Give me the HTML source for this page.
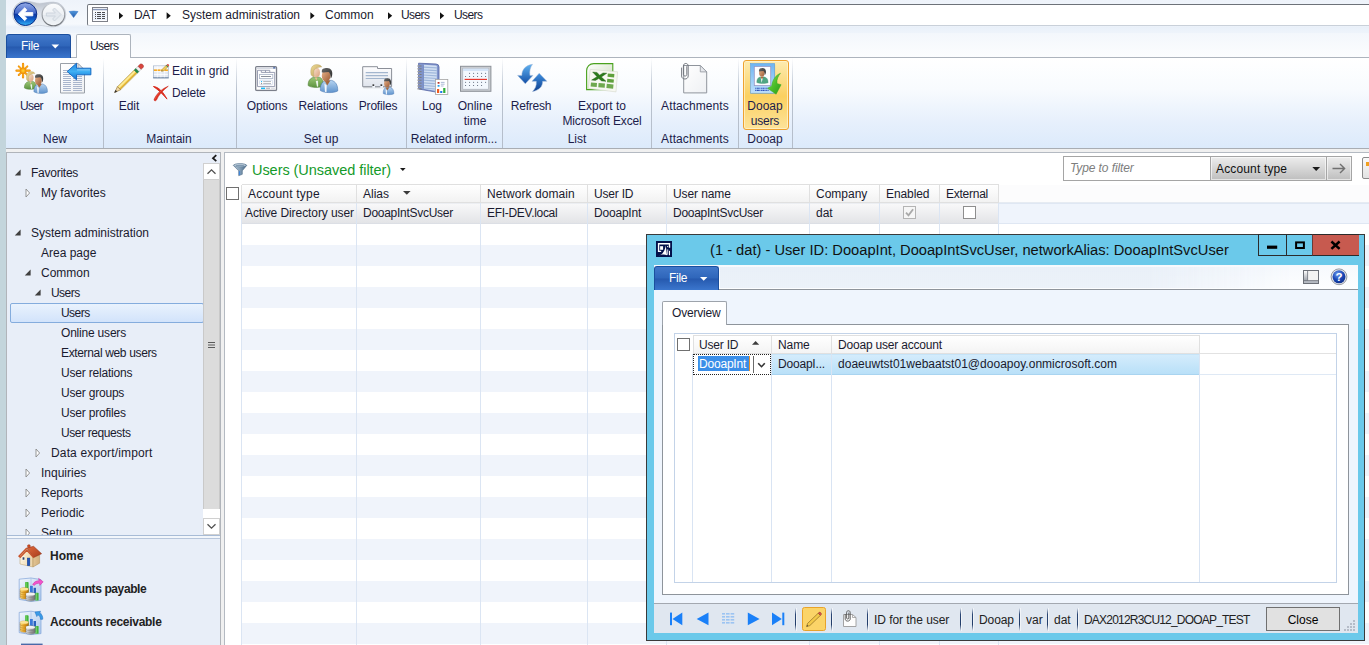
<!DOCTYPE html>
<html lang="en">
<head>
<meta charset="utf-8">
<title>Users - Microsoft Dynamics AX</title>
<style>
*{box-sizing:border-box;margin:0;padding:0}
html,body{width:1369px;height:645px;overflow:hidden}
body{position:relative;background:#f0f0f0;font-family:"Liberation Sans",Arial,sans-serif;font-size:12px;color:#1a1a2e;line-height:14px}
.abs{position:absolute}
.t{position:absolute;white-space:nowrap;line-height:14px;height:14px}
.c{text-align:center}
svg{position:absolute;overflow:visible}
/* left strip */
#strip{left:0;top:0;width:6px;height:645px;background:#c3d5dc}
/* top address bar */
#top{left:6px;top:0;width:1363px;height:33px;background:linear-gradient(#eef3fa 0,#f6f9fd 24px,#e9f0f9 27px,#eef4fb 33px)}
#addr{left:87px;top:4px;width:1290px;height:22px;background:#fff;border:1px solid #9aa1aa;border-top-color:#6d7279;border-left-color:#767b83;border-bottom-color:#c9d0d9;border-radius:2px}
#tabrow{left:6px;top:33px;width:1363px;height:25px;background:linear-gradient(#f3f7fc,#fcfdfe)}
#filebtn{left:6px;top:34px;width:65px;height:24px;border-radius:3px 3px 0 0;background:linear-gradient(#4178ca 0%,#2f66ba 48%,#2659ae 52%,#3b76cd 100%);border:1px solid #1b4f9e;border-bottom:none}
#userstab{left:76px;top:34px;width:55px;height:24px;background:#fff;border:1px solid #adb4bd;border-bottom:none;border-radius:2px 2px 0 0}
/* ribbon */
#ribbon{left:6px;top:57px;width:1363px;height:92px;background:linear-gradient(#ffffff 0%,#f8fbfe 35%,#e7f0fc 70%,#dceafb 100%);border-top:1px solid #adb4bd;border-bottom:1px solid #a9adb3}
.rsep{position:absolute;top:58px;width:1px;height:90px;background:linear-gradient(rgba(185,194,207,0),#b9c2cf 35%,#b4bdca)}
.rl{color:#1c1c4a}
/* nav */
#nav{left:6px;top:152px;width:215px;height:493px;background:#e8eef8;border:1px solid #b0b4ba;border-bottom:none}
#navsel{left:10px;top:303px;width:194px;height:20px;border:1px solid #84acdd;border-radius:2px;background:linear-gradient(#e9f2fd,#d2e3fb)}
#sb{left:203px;top:163px;width:17px;height:372px;background:#fff}
#sbthumb{left:203px;top:180px;width:17px;height:329px;background:#dcdcdc;border-left:1px solid #c9c9c9;border-right:1px solid #c9c9c9}
.sbbtn{position:absolute;left:203px;width:17px;height:17px;background:#fff;border:1px solid #d0d0d0}
.mod{font-weight:bold;font-size:12px;color:#222}
/* content */
#content{left:224px;top:152px;width:1150px;height:500px;background:#fff;border:1px solid #b4bac2}
.hdr{position:absolute;top:184px;height:19px;background:linear-gradient(#ffffff,#f2f2f2);border:1px solid #e0e0e0;border-left:none}
.stripe{position:absolute;left:241px;width:1128px;height:21px;background:#f0f4fb}
.vline{position:absolute;width:1px;background:#dbe5f3}
.cb{position:absolute;width:13px;height:13px;background:#fff;border:1px solid #707070}
/* dialog */
#dlg{left:646px;top:234px;width:719px;height:407px;background:#6bc9ea;border:1px solid #3a3a3a;box-shadow:0 0 0 0 #000}
#dlgin{left:654px;top:266px;width:704px;height:367px;background:#eff5fd}
#dmenu{left:654px;top:265px;width:704px;height:25px;background:linear-gradient(#f6f9fd,#fdfeff);border-bottom:1px solid #8f949b}
#dfile{left:654px;top:266px;width:65px;height:24px;border-radius:3px 3px 0 0;background:linear-gradient(#4178ca 0%,#2f66ba 48%,#2659ae 52%,#3b76cd 100%);border:1px solid #1b4f9e;border-bottom:none}
#dtab{left:662px;top:301px;width:65px;height:24px;background:#fff;border:1px solid #9da3ab;border-bottom:none;border-radius:2px 2px 0 0}
#dpage{left:662px;top:324px;width:687px;height:271px;background:#fff;border:1px solid #8e949b}
#dgrid{left:674px;top:333px;width:663px;height:250px;background:#fff;border:1px solid #c3d3e8}
#dstatus{left:654px;top:603px;width:704px;height:30px;background:#e0e7f0;border-top:1px solid #a3a8b0}
.ssep{position:absolute;top:608px;width:1px;height:23px;background:linear-gradient(rgba(36,64,110,0),#2a4674 28%,#223c68 72%,rgba(36,64,110,0));box-shadow:1px 0 0 rgba(255,255,255,.55)}
.wb{position:absolute;top:234px;height:22px;border:1px solid #2b2b2b;background:#6bc9ea}
</style>
</head>
<body>
<div id="strip" class="abs"></div>
<div id="top" class="abs"></div>
<div id="tabrow" class="abs"></div>
<svg class="abs" style="left:6px;top:0" width="80" height="32" viewBox="6 0 80 32">
<defs>
<linearGradient id="gb" x1="0" y1="0" x2="0" y2="1"><stop offset="0" stop-color="#93aae6"/><stop offset=".46" stop-color="#4468c8"/><stop offset=".5" stop-color="#0c37a2"/><stop offset=".72" stop-color="#0f5cc8"/><stop offset="1" stop-color="#35b4f6"/></linearGradient>
<linearGradient id="gf" x1="0" y1="0" x2="0" y2="1"><stop offset="0" stop-color="#fbfcfd"/><stop offset=".5" stop-color="#eef1f5"/><stop offset=".52" stop-color="#e3e8ee"/><stop offset="1" stop-color="#f2f5f8"/></linearGradient>
<linearGradient id="gfs" x1="0" y1="0" x2="0" y2="1"><stop offset="0" stop-color="#c9ced5"/><stop offset="1" stop-color="#6e7278"/></linearGradient>
<linearGradient id="gp" x1="0" y1="0" x2="0" y2="1"><stop offset="0" stop-color="#b9c0cb"/><stop offset=".5" stop-color="#dde2ea"/><stop offset="1" stop-color="#eef2f7"/></linearGradient>
<linearGradient id="gd" x1="0" y1="0" x2="0" y2="1"><stop offset="0" stop-color="#4f97dc"/><stop offset="1" stop-color="#2458a8"/></linearGradient>
</defs>
<path d="M25.400 1.200A12.900 12.900 0 1 0 25.400 27C32 27 35 25.400 39.500 25.400C44 25.400 47 26.900 53.400 26.900A12.400 12.400 0 1 0 53.400 2.100C47 2.100 44 3.400 39.500 3.400C35 3.400 32 1.200 25.400 1.200Z" fill="url(#gp)" stroke="#c3c9d2" stroke-width=".7"/>
<circle cx="25.400" cy="14.100" r="11.400" fill="url(#gb)" stroke="#0a2c86" stroke-width="1"/>
<path d="M18.200 14.200L24.700 7.800L26.800 9.900L24.200 12.600L32.800 12.600L32.800 15.800L24.200 15.800L26.800 18.500L24.700 20.600Z" fill="#fff" stroke="#fff" stroke-width=".9" stroke-linejoin="round"/>
<circle cx="53.400" cy="14.500" r="11.300" fill="url(#gf)" stroke="url(#gfs)" stroke-width="1.100"/>
<path d="M61 14.500L54.500 8L52.600 10L55.400 13L46.400 13L46.400 16L55.400 16L52.600 19L54.500 21Z" fill="#e3e8ee" stroke="#cbd2db" stroke-width=".9" stroke-linejoin="round"/>
<path d="M69.200 11.500Q73.600 10.700 78 11.500L73.600 17.600Z" fill="url(#gd)" stroke="#2f6fc0" stroke-width=".5" stroke-linejoin="round"/>
</svg>

<div id="addr" class="abs"></div>
<svg class="abs" style="left:92px;top:7px" width="16" height="15" viewBox="0 0 16 15">
<rect x=".5" y=".5" width="15" height="14" fill="#fbfcfe" stroke="#7e8088"/>
<rect x="1" y="1" width="14" height="1.200" fill="#e9ecf2"/>
<rect x="1" y="2.200" width="14" height="1" fill="#6f83ab"/>
<path d="M1 6.500h14M1 8.500h14M1 10.500h14M1 12.500h14" stroke="#dbe6f6" stroke-width=".6"/>
<g stroke="#4e4e52" stroke-width="1"><path d="M3 5.500h1M5 5.500h4M10 5.500h3M3 7.500h1M5 7.500h4M10 7.500h3M3 9.500h1M5 9.500h4M10 9.500h3M3 11.500h1M5 11.500h4M10 11.500h3"/></g>
</svg>
<svg class="abs" style="left:0;top:0" width="500" height="30"><g fill="#111"><path d="M119 12.2l4.2 3.5-4.2 3.5z"/><path d="M166.6 12.2l4.2 3.5-4.2 3.5z"/><path d="M310.4 12.2l4.2 3.5-4.2 3.5z"/><path d="M388 12.2l4.2 3.5-4.2 3.5z"/><path d="M440 12.2l4.2 3.5-4.2 3.5z"/></g></svg>
<div class="t" style="left:134px;top:8px;letter-spacing:-.3px">DAT</div>
<div class="t" style="left:182px;top:8px">System administration</div>
<div class="t" style="left:325px;top:8px">Common</div>
<div class="t" style="left:401px;top:8px;letter-spacing:-.6px">Users</div>
<div class="t" style="left:454px;top:8px;letter-spacing:-.6px">Users</div>

<div id="ribbon" class="abs"></div>
<div id="filebtn" class="abs"></div>
<div id="userstab" class="abs"></div>
<div class="t" style="left:21px;top:39px;color:#fff;letter-spacing:-.3px">File</div>
<svg class="abs" style="left:51px;top:44px" width="9" height="5"><path d="M.5 .5h7.6L4.3 4.6z" fill="#fff"/></svg>
<div class="t" style="left:90px;top:39px;letter-spacing:-.6px">Users</div>
<div class="rsep" style="left:103px"></div><div class="rsep" style="left:236px"></div><div class="rsep" style="left:406px"></div><div class="rsep" style="left:502px"></div><div class="rsep" style="left:651px"></div><div class="rsep" style="left:738px"></div><div class="rsep" style="left:792px"></div>
<div class="abs" style="left:743px;top:60px;width:46px;height:70px;border:1px solid #efa22f;border-radius:3px;background:linear-gradient(#fdebb0 0%,#fbd776 38%,#fbd060 52%,#fde39a 100%);box-shadow:inset 0 0 0 1px rgba(255,245,210,.7)"></div>
<!-- large labels -->
<div class="t c rl" style="left:1px;top:99px;width:61px;letter-spacing:-.55px">User</div>
<div class="t c rl" style="left:46px;top:99px;width:60px;letter-spacing:.3px">Import</div>
<div class="t c rl" style="left:99px;top:99px;width:60px">Edit</div>
<div class="t rl" style="left:172px;top:64px;letter-spacing:.02px">Edit in grid</div>
<div class="t rl" style="left:172px;top:86px;letter-spacing:-.2px">Delete</div>
<div class="t c rl" style="left:237px;top:99px;width:60px;letter-spacing:-.1px">Options</div>
<div class="t c rl" style="left:293px;top:99px;width:60px;letter-spacing:-.1px">Relations</div>
<div class="t c rl" style="left:348px;top:99px;width:60px;letter-spacing:-.2px">Profiles</div>
<div class="t c rl" style="left:402px;top:99px;width:60px">Log</div>
<div class="t c rl" style="left:445px;top:99px;width:60px">Online</div>
<div class="t c rl" style="left:445px;top:114px;width:60px">time</div>
<div class="t c rl" style="left:501px;top:99px;width:60px;letter-spacing:-.2px">Refresh</div>
<div class="t c rl" style="left:552px;top:99px;width:100px">Export to</div>
<div class="t c rl" style="left:552px;top:114px;width:100px;letter-spacing:-.15px">Microsoft Excel</div>
<div class="t c rl" style="left:645px;top:99px;width:100px;letter-spacing:.1px">Attachments</div>
<div class="t c rl" style="left:735px;top:99px;width:60px">Dooap</div>
<div class="t c rl" style="left:735px;top:114px;width:60px;letter-spacing:-.2px">users</div>
<!-- group labels -->
<div class="t c rl" style="left:25px;top:132px;width:60px">New</div>
<div class="t c rl" style="left:129px;top:132px;width:80px">Maintain</div>
<div class="t c rl" style="left:281px;top:132px;width:80px">Set up</div>
<div class="t c rl" style="left:404px;top:132px;width:100px;letter-spacing:-.1px">Related inform...</div>
<div class="t c rl" style="left:547px;top:132px;width:60px">List</div>
<div class="t c rl" style="left:645px;top:132px;width:100px;letter-spacing:.1px">Attachments</div>
<div class="t c rl" style="left:735px;top:132px;width:60px">Dooap</div>
<svg class="abs" style="left:0;top:0" width="800" height="100" viewBox="0 0 800 100">
<defs>
<linearGradient id="skin1" x1="0" y1="0" x2="1" y2="1"><stop offset="0" stop-color="#fbe3cf"/><stop offset="1" stop-color="#d9a07c"/></linearGradient>
<linearGradient id="skin2" x1="0" y1="0" x2="1" y2="1"><stop offset="0" stop-color="#e9b48c"/><stop offset="1" stop-color="#9c5a34"/></linearGradient>
<linearGradient id="grn" x1="0" y1="0" x2="0" y2="1"><stop offset="0" stop-color="#9cc777"/><stop offset="1" stop-color="#5d9440"/></linearGradient>
<linearGradient id="blu" x1="0" y1="0" x2="0" y2="1"><stop offset="0" stop-color="#b5d3f0"/><stop offset="1" stop-color="#5f93cd"/></linearGradient>
<linearGradient id="hair1" x1="0" y1="0" x2="1" y2="1"><stop offset="0" stop-color="#f0dc9a"/><stop offset="1" stop-color="#b79a50"/></linearGradient>
<linearGradient id="hair2" x1="0" y1="0" x2="1" y2="1"><stop offset="0" stop-color="#6a6a6a"/><stop offset="1" stop-color="#2a2a2a"/></linearGradient>
<radialGradient id="sun"><stop offset="0" stop-color="#ffd83a"/><stop offset=".6" stop-color="#f9a60f"/><stop offset="1" stop-color="#e8890a"/></radialGradient>
<linearGradient id="paper" x1="0" y1="0" x2="1" y2="1"><stop offset="0" stop-color="#ffffff"/><stop offset="1" stop-color="#eef0f3"/></linearGradient>
<linearGradient id="barrow" x1="0" y1="0" x2="0" y2="1"><stop offset="0" stop-color="#1f86e0"/><stop offset=".5" stop-color="#3fb0f4"/><stop offset="1" stop-color="#0f6fd0"/></linearGradient>
<linearGradient id="pen" x1="0" y1="0" x2="1" y2="1"><stop offset="0" stop-color="#fff2b0"/><stop offset=".5" stop-color="#f6d662"/><stop offset="1" stop-color="#e0ae3a"/></linearGradient>
<linearGradient id="nb" x1="0" y1="0" x2="1" y2="0"><stop offset="0" stop-color="#7d9ccc"/><stop offset=".35" stop-color="#cfdcf0"/><stop offset=".8" stop-color="#9fb8dc"/><stop offset="1" stop-color="#6d8cc0"/></linearGradient>
<linearGradient id="rf1" x1="0" y1="0" x2="0" y2="1"><stop offset="0" stop-color="#5fb2f2"/><stop offset="1" stop-color="#144fa6"/></linearGradient>
<linearGradient id="rf2" x1="0" y1="1" x2="0" y2="0"><stop offset="0" stop-color="#0e3f8e"/><stop offset="1" stop-color="#3f8fe0"/></linearGradient>
<linearGradient id="xl" x1="0" y1="0" x2="1" y2="1"><stop offset="0" stop-color="#ffffff"/><stop offset=".6" stop-color="#dfe9d6"/><stop offset="1" stop-color="#b9cfa8"/></linearGradient>
<linearGradient id="garrow" x1="0" y1="0" x2="1" y2="1"><stop offset="0" stop-color="#a6e26a"/><stop offset=".5" stop-color="#4fc02a"/><stop offset="1" stop-color="#2a9a18"/></linearGradient>
<linearGradient id="card" x1="0" y1="0" x2="0" y2="1"><stop offset="0" stop-color="#6fb4f2"/><stop offset="1" stop-color="#bfe0fb"/></linearGradient>
<linearGradient id="prof" x1="0" y1="0" x2="0" y2="1"><stop offset="0" stop-color="#fdfdfe"/><stop offset="1" stop-color="#dfe4ec"/></linearGradient>
<g id="pplpair">
<path d="M8.200 25.600C7.900 21 10 18.200 13.800 17.200L19.400 17.200C22.200 18.200 23.500 21 23.300 26C20 27.900 11 27.900 8.200 25.600Z" fill="url(#grn)" stroke="#4e7f35" stroke-width=".6"/>
<path d="M14.600 17.400L16.400 20.600L17.400 17.400Z" fill="#e9b990"/>
<path d="M15.800 21L18 20.800L18.200 26.600L17 26.800Z" fill="#eaf3ea"/>
<ellipse cx="16.600" cy="12.400" rx="3.400" ry="4.700" fill="url(#skin1)"/>
<path d="M11 14.600C9.900 8 12.500 4.500 16.600 4.600C19.200 4.500 21.200 5.500 21.700 7.100C19.600 7.200 18 7.500 17 8.100C14.600 8.600 13.900 10 13.700 12C13.500 14 13.800 15.600 14.200 16.900C12.600 16.600 11.400 15.900 11 14.600Z" fill="url(#hair1)" stroke="#a08848" stroke-width=".3"/>
<path d="M20.400 30.600C20 25 22 21.500 26 20.400L31.600 20.400C35.600 21.500 37.900 25 37.700 31C33 33.300 24.500 33.100 20.400 30.600Z" fill="url(#blu)" stroke="#4a78b4" stroke-width=".6"/>
<path d="M24.600 20.600L27.200 25.400L30.400 20.400Z" fill="#a8683c"/>
<path d="M24.400 23.400L26.700 25.200L26.500 32.200L24.900 31.800Z" fill="#f4f7fb"/>
<ellipse cx="26.100" cy="15.900" rx="4.300" ry="5.700" fill="url(#skin2)"/>
<path d="M21.900 12.400C21.300 8.600 24 8 27 8C31 8 32.800 11 32.200 15C32 16.600 31.400 17.800 30.700 18.600C30.700 15.600 30.100 13.200 28.600 12C26 12.500 23.500 12.500 21.900 12.400Z" fill="url(#hair2)"/>
</g>
</defs>
<!-- User icon -->
<g transform="translate(23.050 70.700)">
<g stroke="#f08c08" stroke-width="2.200" stroke-linecap="round"><path d="M0 -6.800V6.800M-6.600 0H6.600"/><path d="M-4.300 -4.300L4.300 4.300M-4.300 4.300L4.300 -4.300" stroke-width="2"/></g>
<g stroke="#fbb21c" stroke-width="1.100" stroke-linecap="round"><path d="M0 -6.400V6.400M-6.200 0H6.200"/><path d="M-4 -4L4 4M-4 4L4 -4"/></g>
<circle r="3.300" fill="url(#sun)"/>
</g>
<use href="#pplpair" transform="translate(18 68) scale(.78)"/>
<!-- Import icon -->
<path d="M60.500 63.500h17.500l6.500 6.500v23h-24z" fill="url(#paper)" stroke="#9aa0a8" stroke-width="1"/>
<path d="M78 63.500v6.500h6.500z" fill="#e3e6ea" stroke="#9aa0a8" stroke-width=".8"/>
<g stroke="#a9b5cc" stroke-width="1"><path d="M63 70.500h8M63 72.500h8M63 74.500h8M63 76.500h8M63 78.500h8M63 80.500h8M63 82.500h8M63 84.500h8M63 86.500h8M63 88.500h8M63 90.500h8M73 76.500h9M73 78.500h9M73 80.500h9M73 82.500h9M73 84.500h9M73 86.500h9M73 88.500h9M73 90.500h9"/></g>
<path d="M67.200 71.500l9.300-8.300v5h14.400v6.600H76.500v5z" fill="url(#barrow)" stroke="#0e63c0" stroke-width=".9" stroke-linejoin="round"/>
<path d="M77 69.300h13v1.200H77z" fill="#8fd2fb" opacity=".8"/>
<!-- Edit pencil -->
<g>
<path d="M117.450 86.640L134.150 70.040L137.250 73.160L120.550 89.760Z" fill="url(#pen)" stroke="#9a8040" stroke-width=".5" stroke-linejoin="round"/>
<path d="M118.600 87.600L135.200 71.100" stroke="#fff2a8" stroke-width="1.200" opacity=".9"/>
<path d="M119.900 88.900L136.500 72.300" stroke="#d9a11e" stroke-width="1" opacity=".9"/>
<path d="M114.700 92.400L117.450 86.640L120.550 89.760Z" fill="#f3d9a8" stroke="#8a6a22" stroke-width=".6" stroke-linejoin="round"/>
<path d="M114.700 92.400L115.700 90.300L116.900 91.500Z" fill="#2a2a2a" stroke="#2a2a2a" stroke-width=".5"/>
<path d="M134.150 70.040L137.250 73.160L139.050 71.460L135.950 68.340Z" fill="#1f8a46" stroke="#14602f" stroke-width=".4"/>
<path d="M135.950 68.340L139.050 71.460L141.150 69.360L138.050 66.240Z" fill="#f2f2f2" stroke="#9a9a9a" stroke-width=".4"/>
<path d="M138.050 66.240L141.150 69.360L143.200 67.300C144.400 65.600 142.200 63.300 140.300 64.100Z" fill="#d8463e" stroke="#9a2e28" stroke-width=".5"/>
</g>
<!-- Edit in grid icon -->
<g>
<rect x="153.500" y="65.900" width="14.800" height="11.800" fill="#e3e9f2" stroke="#a9b8ce" stroke-width=".8"/>
<path d="M153.200 77.900H168.700" stroke="#5f7896" stroke-width=".9"/>
<rect x="153.900" y="66.300" width="14" height="2.500" fill="#f4f6fa"/>
<rect x="153.900" y="69.200" width="14" height="1.900" fill="#f8a10f"/>
<path d="M153.900 68.900H167.900M153.900 71.400H167.900M153.900 74.500H167.900" stroke="#fff" stroke-width=".7"/>
<path d="M157.400 66.300V77.400M160.900 66.300V77.400M164.400 66.300V77.400" stroke="#fff" stroke-width=".7" opacity=".85"/>
<path d="M161.600 71.300L162.200 69.300L166.600 64.900L168.200 66.500L163.800 70.900Z" fill="#f3cf5a" stroke="#9a7626" stroke-width=".5" stroke-linejoin="round"/>
<path d="M161.600 71.300L161.900 70.300L162.600 71Z" fill="#333"/>
<path d="M165.900 65.600L166.600 64.900L168.200 66.500L167.500 67.200Z" fill="#2f8a4a"/>
<path d="M166.600 64.900L167.400 64.100C168.200 63.500 169.600 64.900 169 65.700L168.200 66.500Z" fill="#d9534a"/>
</g>
<!-- Delete X -->
<g>
<path d="M153.400 86.500C158.500 87 163 91.500 167 99.100C162.500 93.800 158.500 90 153.400 86.500Z" fill="#d92a1c" stroke="#d92a1c" stroke-width=".9" stroke-linejoin="round"/>
<path d="M168.300 86.200C162 88.600 156.600 93.600 154.100 99.200C153.600 101 155.800 101.400 156.500 100C158.600 95 163 90.200 168.300 86.200Z" fill="#dc2c1e" stroke="#c8281a" stroke-width=".5" stroke-linejoin="round"/>
<path d="M155 99.300C156.600 95.400 159.600 91.800 163 89.200" fill="none" stroke="#f26a58" stroke-width=".7" opacity=".8"/>
</g>
<!-- Options -->
<g>
<rect x="256.200" y="67.400" width="21" height="24" rx="1" fill="#000" opacity=".08"/>
<rect x="255.700" y="66.600" width="20.800" height="23.800" rx="1" fill="#fff" stroke="#7b7f8a" stroke-width="1.300"/>
<rect x="256.600" y="67.500" width="19" height="1.500" fill="#d5d9e2"/>
<rect x="273.200" y="67.200" width="2.200" height="1.300" fill="#3f5fa0"/>
<path d="M257.500 70.300H261.300V72.400H274.700V86.600H257.500Z" fill="#fdfdfe" stroke="#8e94aa" stroke-width=".9"/>
<path d="M261.300 70.300H269.800V72.400M265.500 70.300V72.400" fill="none" stroke="#8e94aa" stroke-width=".9"/>
<rect x="259.400" y="74.400" width="13.400" height="4.200" fill="#fff" stroke="#a9b3c6" stroke-width=".8"/>
<path d="M261 76.500H271" stroke="#8a8f9a" stroke-width="1"/>
<rect x="259.600" y="80.200" width="13" height="4.500" rx="1" fill="#fff" stroke="#c5d3e8" stroke-width=".7"/>
<path d="M263.200 81.600H271M263.200 83.600H271" stroke="#9a9fa8" stroke-width=".8"/>
<rect x="261" y="81.100" width="1.100" height="1.100" fill="#1fb0f4"/><rect x="261" y="83.100" width="1.100" height="1.100" fill="#8a8a8a"/>
<rect x="261" y="87.600" width="4.100" height="1.500" fill="#19b8f6"/><rect x="266.100" y="87.600" width="4" height="1.500" fill="#b9bcc4"/><rect x="271.100" y="87.600" width="3.800" height="1.500" fill="#dcdfe5"/>
</g>
<!-- Relations -->
<use href="#pplpair" transform="translate(300 60)"/>
<!-- Profiles -->
<g>
<path d="M363.200 87.600H391.800" stroke="#000" stroke-width="1.400" opacity=".13"/>
<path d="M362.700 66.700H377.500V68.500H391.600V86.700H362.700Z" fill="url(#prof)" stroke="#8b8f98" stroke-width="1"/>
<path d="M365.700 72.700H388M365.700 75.600H388M365.700 78.500H388" stroke="#a3b6ce" stroke-width="1.200"/>
<rect x="372.300" y="85.900" width="2.700" height="1.900" fill="#f3f7fc"/><rect x="380.300" y="85.900" width="2.700" height="1.900" fill="#f3f7fc"/>
<rect x="372.500" y="84.300" width="1.700" height="1.700" fill="#3c3c3c"/><rect x="380.500" y="84.300" width="1.700" height="1.700" fill="#3c3c3c"/>
<path d="M383.300 93.600C383 90.200 384.200 88 386.600 87.300L390.200 87.300C392.600 88 393.900 90.200 393.800 93.800C391 95.100 386 95 383.300 93.600Z" fill="url(#blu)" stroke="#4a78b4" stroke-width=".5"/>
<path d="M385.600 87.400L387.300 90.400L389.400 87.200Z" fill="#a8683c"/>
<path d="M385.600 89.300L387 90.400L386.900 94.600L385.900 94.400Z" fill="#f4f7fb"/>
<ellipse cx="387" cy="83.400" rx="2.900" ry="3.700" fill="url(#skin2)"/>
<path d="M384.200 81.400C383.800 78.900 385.600 78.300 387.600 78.300C390.300 78.300 391.500 80.400 391.100 83.100C391 84.100 390.600 84.900 390.100 85.500C390.100 83.500 389.700 81.900 388.700 81.100C387 81.400 385.300 81.400 384.200 81.400Z" fill="url(#hair2)"/>
</g>
<!-- Log -->
<g>
<path d="M418.600 63.200L436 64Q439 64.200 439 67V92.600L418.600 89Z" fill="#8196cd" stroke="#5363a3" stroke-width=".8" stroke-linejoin="round"/>
<path d="M423.400 64.700L435.600 65.400Q436.800 65.500 436.800 66.600V91L423.400 88.700Z" fill="#d3e0f3"/>
<path d="M423.400 67.2L436.800 67.9M423.400 69.8L436.800 70.6M423.400 72.4L436.800 73.2M423.400 75.0L436.800 75.9M423.400 77.6L436.800 78.5M423.400 80.2L436.800 81.2M423.400 82.8L436.800 83.8M423.400 85.4L436.800 86.5M423.400 88.0L436.800 89.1" stroke="#9fb7db" stroke-width="1.200" fill="none"/>
<path d="M423.400 64.700V88.700" stroke="#5f74b4" stroke-width=".7"/>
<path d="M417.400 66.0H421.600M417.400 68.8H421.600M417.400 71.7H421.600M417.400 74.5H421.600M417.400 77.4H421.600M417.400 80.2H421.600M417.400 83.1H421.600M417.400 86.0H421.600M417.400 88.8H421.600" stroke="#7a7a7a" stroke-width="1" fill="none"/>
<path d="M417.400 66.0H419.400M417.400 68.8H419.400M417.400 71.7H419.400M417.400 74.5H419.400M417.400 77.4H419.400M417.400 80.2H419.400M417.400 83.1H419.400M417.400 86.0H419.400M417.400 88.8H419.400" stroke="#d8d8d8" stroke-width=".5" fill="none"/>
<rect x="435.400" y="79.500" width="12.400" height="15" fill="#fff" stroke="#a3a3a3" stroke-width=".8"/>
<rect x="437.600" y="82" width="1.900" height="1.700" fill="#b8322a"/><rect x="437.600" y="85" width="1.900" height="1.700" fill="#1f9be8"/>
<path d="M440.800 82.400H444.600M440.800 84.200H444.600M440.800 86H443.600" stroke="#8a9cc4" stroke-width=".7"/>
<rect x="437" y="89" width="2.200" height="4" fill="#f05a1e"/><rect x="440.200" y="91" width="2.100" height="2" fill="#1f7be8"/><rect x="443.200" y="88" width="2.200" height="5" fill="#2fae3a"/>
</g>
<!-- Online time -->
<g>
<rect x="460.500" y="66.300" width="30.400" height="25" fill="#c9ccd1" stroke="#8d9198" stroke-width="1"/>
<rect x="462.800" y="68.400" width="25.800" height="20.800" fill="#f3f8fe" stroke="#a5abb5" stroke-width=".6"/>
<rect x="463" y="68.600" width="25.400" height="2.400" fill="#d4e4f7"/>
<g fill="#4a5568"><circle cx="469.600" cy="73.300" r=".55"/><circle cx="473.600" cy="73.300" r=".55"/><circle cx="477.600" cy="73.300" r=".55"/><circle cx="481.600" cy="73.300" r=".55"/><circle cx="485.600" cy="73.300" r=".55"/>
<circle cx="465.600" cy="76.500" r=".55"/><circle cx="469.600" cy="76.500" r=".55"/><circle cx="473.600" cy="76.500" r=".55"/><circle cx="477.600" cy="76.500" r=".55"/><circle cx="481.600" cy="76.500" r=".55"/><circle cx="485.600" cy="76.500" r=".55"/>
<circle cx="465.600" cy="82.300" r=".55"/><circle cx="469.600" cy="82.300" r=".55"/><circle cx="473.600" cy="82.300" r=".55"/><circle cx="477.600" cy="82.300" r=".55"/><circle cx="481.600" cy="82.300" r=".55"/><circle cx="485.600" cy="82.300" r=".55"/>
<circle cx="465.600" cy="85.500" r=".55"/><circle cx="469.600" cy="85.500" r=".55"/><circle cx="473.600" cy="85.500" r=".55"/><circle cx="477.600" cy="85.500" r=".55"/><circle cx="481.600" cy="85.500" r=".55"/></g>
<path d="M464.600 79.400h22.400" stroke="#e8382e" stroke-width="1.200"/>
</g>
<!-- Refresh -->
<g stroke-linejoin="round">
<path d="M532.500 64.300C525.500 65.300 521.700 69.800 521.900 75.400L517.600 75.400L525.300 83.800L532.900 75.400L529.900 75.400C529.300 71 530.300 67.200 532.500 64.300Z" fill="url(#rf1)" stroke="#9fb6d6" stroke-width=".5"/>
<path d="M532.500 91.500C539.300 90.300 542.800 86.400 542.600 81.300L546.900 81.300L539.200 73.300L532 81.300L536.300 81.300C536.700 85.600 535.300 88.800 532.500 91.500Z" fill="url(#rf2)" stroke="#9fb6d6" stroke-width=".5"/>
</g>
<!-- Excel -->
<g>
<path d="M593.800 63.600H612.800V89.600H586.600V70.800C586.600 66.600 589.600 63.600 593.800 63.600Z" fill="url(#xl)" stroke="#4aa21e" stroke-width="1.100"/>
<path d="M590.200 69.400L617.600 71.800L616 91.900L588.400 88.400Z" fill="#f7f8f1" stroke="#d5d9cc" stroke-width=".6"/>
<g fill="#5fa03c">
<path d="M607.800 73.400L614.400 74L614.100 77.400L607.500 76.800Z"/><path d="M607.300 78.800L613.900 79.400L613.600 82.800L607 82.200Z"/>
<path d="M591 82.400L597 82.900L596.700 87.100L590.600 86.500Z" opacity=".9"/><path d="M598.600 83L605 83.600L604.700 87.800L598.300 87.200Z" opacity=".9"/><path d="M606.800 83.800L613.500 84.400L613.100 88.700L606.400 88Z" opacity=".9"/>
</g>
<path d="M592.600 72L597 72.400L599.600 75.200L603 72.900L606.800 73.200L601.400 77L606 81.300L601.600 80.900L598.800 78.500L595.400 80.400L591.600 80.100L597 76.700Z" fill="#2c7a1c" stroke="#1f5c14" stroke-width=".4"/>
</g>
<!-- Attachments -->
<g>
<path d="M683.700 65.500h16.600l6.400 6.400v21h-23z" fill="url(#paper)" stroke="#8f949c" stroke-width="1"/>
<path d="M700.300 65.500v6.400h6.400z" fill="#e6e8ec" stroke="#8f949c" stroke-width=".8"/>
<path d="M686.800 66.200v8.200c0 2.200-3.400 2.200-3.400 0V66c0-3.400 4.800-3.400 4.800 0v10c0 4-6.600 4-6.600 0v-8.400" fill="none" stroke="#6a6e76" stroke-width=".9"/>
</g>
<!-- Dooap users -->
<g>
<rect x="751.200" y="64.400" width="24" height="29.600" fill="#000" opacity=".12"/>
<rect x="750.600" y="63.600" width="24" height="29.600" fill="url(#card)" stroke="#5a9fe0" stroke-width=".6"/>
<rect x="754.300" y="66.400" width="16.400" height="19.200" fill="#fdfdff" stroke="#9a98c4" stroke-width=".8"/>
<path d="M756.800 82.600C756.600 79.400 757.800 77.600 760.200 77L764.600 77C767 77.700 768.200 79.600 768.100 82.800C765.600 83.900 759.600 83.900 756.800 82.600Z" fill="#4fa684" stroke="#3a8a6a" stroke-width=".3"/>
<path d="M760.600 77.200L761.600 82.800L763 77.600Z" fill="#eef6f1"/>
<path d="M760.400 76.800L762 79.200L763.800 76.400Z" fill="#a8683c"/>
<ellipse cx="761.800" cy="72.800" rx="2.800" ry="3.800" fill="url(#skin2)"/>
<path d="M759 71.400C758.600 68.800 760.200 68 762.400 68C765.200 68 766.400 70.200 765.800 73C765.600 74 765.200 74.800 764.800 75.200C764.800 73.200 764.400 71.800 763.400 71C761.800 71.400 760.200 71.400 759 71.400Z" fill="url(#hair2)"/>
<path d="M755.200 88.300H768.600M755.200 90.400H768.600" stroke="#2a4fb8" stroke-width="1.100" stroke-dasharray="1.200 .500 2 .400 .800 .600"/>
<path d="M780.500 73.300C776 75 772.500 79.500 771.700 85.900L767.600 88.300L776.100 94.200L781.100 84.700L777 83.600C776.500 79.500 778 76 780.500 73.300Z" fill="url(#garrow)" stroke="#3aa822" stroke-width=".5" stroke-linejoin="round"/>
</g>
</svg>


<div id="nav" class="abs"></div>
<div id="navsel" class="abs"></div>
<div id="sb" class="abs"></div>
<div id="sbthumb" class="abs"></div>
<div class="sbbtn" style="top:163px"></div>
<div class="sbbtn" style="top:518px"></div>
<svg class="abs" style="left:0;top:150px" width="224" height="400" viewBox="0 150 224 400">
<path d="M216.300 155.200l-3.300 3 3.300 3" fill="none" stroke="#1a1a1a" stroke-width="1.800"/>
<path d="M207.500 173.800l4-4 4 4" fill="none" stroke="#505050" stroke-width="1.300"/>
<path d="M207.500 524.200l4 4 4-4" fill="none" stroke="#505050" stroke-width="1.300"/>
<path d="M208 342.500h7M208 345h7M208 347.500h7" stroke="#5a5a5a" stroke-width="1.100"/>
<g fill="#404040"><path d="M20.600 169.600v5.800h-5.800z"/><path d="M20.600 229.600v5.800h-5.800z"/><path d="M30.600 269.600v5.800h-5.800z"/><path d="M40.600 289.600v5.800h-5.800z"/></g>
<g fill="#fff" stroke="#8a8a8a" stroke-width=".9"><path d="M26 189l3.600 4-3.600 4z"/><path d="M36 449l3.600 4-3.600 4z"/><path d="M26 469l3.600 4-3.600 4z"/><path d="M26 489l3.600 4-3.600 4z"/><path d="M26 509l3.600 4-3.600 4z"/><path d="M26 529l3.600 4-3.600 4z"/></g>
</svg>
<div class="t" style="left:31px;top:166px;letter-spacing:-.25px">Favorites</div>
<div class="t" style="left:41px;top:186px">My favorites</div>
<div class="t" style="left:31px;top:226px">System administration</div>
<div class="t" style="left:41px;top:246px">Area page</div>
<div class="t" style="left:41px;top:266px">Common</div>
<div class="t" style="left:51px;top:286px;letter-spacing:-.55px">Users</div>
<div class="t" style="left:61px;top:306px;letter-spacing:-.55px">Users</div>
<div class="t" style="left:61px;top:326px;letter-spacing:-.2px">Online users</div>
<div class="t" style="left:61px;top:346px;letter-spacing:-.35px">External web users</div>
<div class="t" style="left:61px;top:366px;letter-spacing:-.2px">User relations</div>
<div class="t" style="left:61px;top:386px;letter-spacing:-.2px">User groups</div>
<div class="t" style="left:61px;top:406px;letter-spacing:-.2px">User profiles</div>
<div class="t" style="left:61px;top:426px;letter-spacing:-.4px">User requests</div>
<div class="t" style="left:51px;top:446px;letter-spacing:.15px">Data export/import</div>
<div class="t" style="left:41px;top:466px">Inquiries</div>
<div class="t" style="left:41px;top:486px">Reports</div>
<div class="t" style="left:41px;top:506px">Periodic</div>
<div class="abs" style="left:7px;top:520px;width:196px;height:15px;overflow:hidden"><div class="t" style="left:34px;top:6px">Setup</div></div>
<div class="abs" style="left:7px;top:535px;width:213px;height:4px;background:#f2f6fb;border-top:1px solid #a7bbd6;border-bottom:1px solid #b7c6dc"></div>
<div class="t mod" style="left:50px;top:548px;line-height:16px;height:16px">Home</div>
<div class="t mod" style="left:50px;top:581px;line-height:16px;height:16px;letter-spacing:-.4px">Accounts payable</div>
<div class="t mod" style="left:50px;top:614px;line-height:16px;height:16px;letter-spacing:-.27px">Accounts receivable</div>
<svg class="abs" style="left:0;top:540px" width="60" height="105" viewBox="0 540 60 105">
<defs>
<linearGradient id="roof" x1="0" y1="0" x2="1" y2="1"><stop offset="0" stop-color="#e0693c"/><stop offset="1" stop-color="#a63c1c"/></linearGradient>
<linearGradient id="wall" x1="0" y1="0" x2="1" y2="0"><stop offset="0" stop-color="#fdf3dc"/><stop offset="1" stop-color="#ecd3a6"/></linearGradient>
<linearGradient id="wall2" x1="0" y1="0" x2="1" y2="0"><stop offset="0" stop-color="#e2c596"/><stop offset="1" stop-color="#d2b07c"/></linearGradient>
<linearGradient id="coin" x1="0" y1="0" x2="1" y2="0"><stop offset="0" stop-color="#f9d978"/><stop offset=".5" stop-color="#e9a624"/><stop offset="1" stop-color="#b67410"/></linearGradient>
<linearGradient id="coin2" x1="0" y1="0" x2="1" y2="0"><stop offset="0" stop-color="#ececec"/><stop offset=".5" stop-color="#a6a6a6"/><stop offset="1" stop-color="#767676"/></linearGradient>
<linearGradient id="chartbg" x1="0" y1="0" x2="1" y2="1"><stop offset="0" stop-color="#f4f8fd"/><stop offset="1" stop-color="#a9c6ec"/></linearGradient>
<g id="acct">
<path d="M-.800 1.400L11 .200L21 1.800V22.600L11 23.600L-.800 21.600Z" fill="url(#chartbg)" stroke="#7fa3d8" stroke-width=".7" stroke-linejoin="round"/>
<path d="M11 .200V23.600" stroke="#9dbbe4" stroke-width=".6"/>
<rect x="5" y="4.200" width="3.600" height="13" rx=".800" fill="#45b53c"/><rect x="5.400" y="4.600" width="1.200" height="12" fill="#8fe07f" opacity=".7"/>
<rect x="10" y="8" width="2.800" height="12" fill="#3a78d8"/><rect x="13.600" y="10" width="2.400" height="11" fill="#2b61bd"/>
<rect x="15.200" y="15" width="3.400" height="7.800" rx=".600" fill="#45b53c"/><rect x="15.600" y="15.400" width="1.100" height="7" fill="#9be68c" opacity=".7"/>
<path d="M.200 11.400C.200 9.600 8.400 9.600 8.400 11.400V19.800C8.400 21.600 .200 21.600 .200 19.800Z" fill="url(#coin)" stroke="#a4680c" stroke-width=".4"/>
<path d="M.200 13.600C.200 15.300 8.400 15.300 8.400 13.600M.200 15.800C.200 17.500 8.400 17.500 8.400 15.800M.200 18C.200 19.700 8.400 19.700 8.400 18" fill="none" stroke="#a4680c" stroke-width=".4"/>
<ellipse cx="4.300" cy="11.400" rx="4.100" ry="1.400" fill="#fce596"/>
<path d="M6 16.200C6 14.400 15 14.400 15 16.200V21.800C15 23.700 6 23.700 6 21.800Z" fill="url(#coin2)" stroke="#686868" stroke-width=".4"/>
<path d="M6 18.300C6 20 15 20 15 18.300M6 20.200C6 21.900 15 21.900 15 20.200" fill="none" stroke="#6e6e6e" stroke-width=".4"/>
<ellipse cx="10.500" cy="16.200" rx="4.500" ry="1.500" fill="#f2f2f2"/>
</g>
</defs>
<path d="M20 556L26.800 549L33 556.400V567L20 564Z" fill="url(#wall)" stroke="#b89a64" stroke-width=".5" stroke-linejoin="round"/>
<path d="M33 556.400L39.600 554.400V563.200L33 567Z" fill="url(#wall2)" stroke="#a88a54" stroke-width=".5" stroke-linejoin="round"/>
<path d="M26.800 548L33.600 546.300L41.600 553.700L33.600 557.600Z" fill="url(#roof)" stroke="#8a2c12" stroke-width=".5" stroke-linejoin="round"/>
<path d="M26.800 548L18.900 556.300L20.300 557.300L26.900 550.300L33.600 557.600" fill="none" stroke="#c9542c" stroke-width="1.300" stroke-linejoin="round"/>
<rect x="27.600" y="544.800" width="2.600" height="2.800" rx=".800" fill="#cf4f26" stroke="#8a2c12" stroke-width=".4"/>
<rect x="27.200" y="558" width="2.700" height="7.800" fill="#2456b8" stroke="#173c86" stroke-width=".4"/>
<rect x="22.200" y="557" width="2.600" height="3" fill="#33415f" stroke="#fff" stroke-width=".5"/>
<use href="#acct" transform="translate(20 577.800)"/>
<path d="M32.600 584.400C34.400 581.600 36.600 580.600 39.200 580.800L38.600 578.400L43.200 581.800L39.800 585.400L39.600 583.200C37.400 583.200 35.600 583.800 34.200 585.400Z" fill="#f254cc" stroke="#c62a9c" stroke-width=".5" stroke-linejoin="round"/>
<use href="#acct" transform="translate(20 611)"/>
<path d="M42.800 619.200C43 616 41.600 613.800 39.200 613L40.600 611.200L35 612L36.800 616.600L37.800 614.800C39.400 615.600 40.400 617 40.600 619.400Z" fill="#3a9be8" stroke="#1a6fc0" stroke-width=".5" stroke-linejoin="round"/>
<rect x="21" y="643.600" width="21.600" height="2" fill="#4a6aa8"/>
</svg>

<div id="content" class="abs"></div>
<div class="stripe" style="top:245px"></div>
<div class="stripe" style="top:287px"></div>
<div class="stripe" style="top:329px"></div>
<div class="stripe" style="top:371px"></div>
<div class="stripe" style="top:413px"></div>
<div class="stripe" style="top:455px"></div>
<div class="stripe" style="top:497px"></div>
<div class="stripe" style="top:539px"></div>
<div class="stripe" style="top:581px"></div>
<div class="stripe" style="top:623px"></div>
<div class="abs" style="left:241px;top:203px;width:1128px;height:21px;background:linear-gradient(#f8f8f9,#e3e4e7);border-top:1px solid #eceef2;border-bottom:1px solid #dcdfe5"></div>
<div class="abs" style="left:999px;top:203px;width:370px;height:21px;background:#eff4fc;border-top:1px solid #dfe7f3;border-bottom:1px solid #dfe7f3"></div>
<div class="vline" style="left:241px;top:203px;height:442px"></div>
<div class="vline" style="left:356px;top:203px;height:442px"></div>
<div class="vline" style="left:480px;top:203px;height:442px"></div>
<div class="vline" style="left:587px;top:203px;height:442px"></div>
<div class="vline" style="left:666px;top:203px;height:442px"></div>
<div class="vline" style="left:809px;top:203px;height:442px"></div>
<div class="vline" style="left:879px;top:203px;height:442px"></div>
<div class="vline" style="left:939px;top:203px;height:442px"></div>
<div class="vline" style="left:998px;top:203px;height:442px"></div>
<div class="hdr" style="left:242px;width:115px"></div>
<div class="t" style="left:248px;top:187px;letter-spacing:.2px">Account type</div>
<div class="hdr" style="left:357px;width:124px"></div>
<div class="t" style="left:363px;top:187px;letter-spacing:0px">Alias</div>
<div class="hdr" style="left:481px;width:107px"></div>
<div class="t" style="left:487px;top:187px;letter-spacing:.08px">Network domain</div>
<div class="hdr" style="left:588px;width:79px"></div>
<div class="t" style="left:594px;top:187px;letter-spacing:-0.2px">User ID</div>
<div class="hdr" style="left:667px;width:143px"></div>
<div class="t" style="left:673px;top:187px;letter-spacing:-0.1px">User name</div>
<div class="hdr" style="left:810px;width:70px"></div>
<div class="t" style="left:816px;top:187px;letter-spacing:0px">Company</div>
<div class="hdr" style="left:880px;width:60px"></div>
<div class="t" style="left:886px;top:187px;letter-spacing:-0.1px">Enabled</div>
<div class="hdr" style="left:940px;width:59px"></div>
<div class="t" style="left:946px;top:187px;letter-spacing:-0.25px">External</div>
<div id="hdrright" class="abs" style="left:999px;top:185px;width:370px;height:18px;background:#fcfcfd;border-bottom:1px solid #e6ebf2"></div>
<div class="abs" style="left:241px;top:185px;width:1px;height:18px;background:#e0e0e0"></div>
<svg class="abs" style="left:403px;top:191px" width="8" height="4"><path d="M0 0h7.600l-3.800 3.800z" fill="#3c3c3c"/></svg>
<div class="cb" style="left:226px;top:187px"></div>
<div class="t" style="left:245px;top:206px;letter-spacing:-0.08px">Active Directory user</div>
<div class="t" style="left:363px;top:206px;letter-spacing:-0.28px">DooapIntSvcUser</div>
<div class="t" style="left:487px;top:206px;letter-spacing:-0.3px">EFI-DEV.local</div>
<div class="t" style="left:594px;top:206px;letter-spacing:-0.2px">DooapInt</div>
<div class="t" style="left:673px;top:206px;letter-spacing:-0.28px">DooapIntSvcUser</div>
<div class="t" style="left:816px;top:206px;letter-spacing:0px">dat</div>
<div class="cb" style="left:903px;top:206px;width:13px;height:13px;border-color:#b4b4b4;background:#f6f6f6"></div>
<svg class="abs" style="left:903px;top:206px" width="13" height="13"><path d="M3 6.600l2.500 2.700 4.600-6" fill="none" stroke="#a9a9a9" stroke-width="1.800"/></svg>
<div class="cb" style="left:963px;top:206px;width:13px;height:13px;border-color:#8e8e8e"></div>
<svg class="abs" style="left:233px;top:163px" width="14" height="14" viewBox="0 0 14 14"><defs><linearGradient id="fun" x1="0" y1="0" x2="1" y2="0"><stop offset="0" stop-color="#b4c5d3"/><stop offset=".45" stop-color="#8ba4ba"/><stop offset="1" stop-color="#456786"/></linearGradient></defs><path d="M.300 2.400C.300 .300 13.700 .300 13.700 2.400L9.300 7.800V11.300L5.700 12.700V7.800Z" fill="url(#fun)" stroke="#4f6c88" stroke-width=".6" stroke-linejoin="round"/><ellipse cx="7" cy="2.300" rx="6.300" ry="1.500" fill="#cbd8e3" stroke="#5f7c98" stroke-width=".5"/><ellipse cx="7" cy="2.500" rx="4.600" ry=".800" fill="#7f9ab2"/><path d="M6.500 8.200V12" stroke="#3f86da" stroke-width="1.200"/></svg>
<div class="t" style="left:252px;top:161px;font-size:14.500px;line-height:18px;height:18px;color:#149a2a;letter-spacing:-.05px">Users (Unsaved filter)</div>
<svg class="abs" style="left:400px;top:168px" width="6" height="4"><path d="M0 0h5.600l-2.800 3z" fill="#1a1a1a"/></svg>
<div class="abs" style="left:1063px;top:156px;width:289px;height:25px;background:#fff;border:1px solid #a5a5a5"></div>
<div class="abs" style="left:1210px;top:157px;width:117px;height:23px;background:linear-gradient(#ededed,#d6d6d6 50%,#bebebe);border-left:1px solid #a5a5a5;border-right:1px solid #a5a5a5;box-shadow:inset 0 0 0 1px rgba(255,255,255,.6)"></div>
<div class="abs" style="left:1327px;top:157px;width:24px;height:23px;background:linear-gradient(#ededed,#d6d6d6 50%,#bebebe);box-shadow:inset 0 0 0 1px rgba(255,255,255,.6)"></div>
<div class="t" style="left:1070px;top:161px;font-style:italic;color:#7d7d7d;letter-spacing:-.1px">Type to filter</div>
<div class="t" style="left:1216px;top:162px;color:#111;letter-spacing:.15px">Account type</div>
<svg class="abs" style="left:1312px;top:167px" width="9" height="5"><path d="M.3 0h7.800l-3.900 4z" fill="#1a1a1a"/></svg>
<svg class="abs" style="left:1331px;top:162px" width="16" height="13"><path d="M1.500 6.500h12M9 2l4.600 4.500L9 11" fill="none" stroke="#707070" stroke-width="1.400"/></svg>
<div class="abs" style="left:1362px;top:157px;width:12px;height:22px;background:linear-gradient(#fafafa,#e2e2e2);border:1px solid #8a8a8a;border-radius:2px"></div>
<div class="abs" style="left:1366px;top:162px;width:3px;height:4px;background:#f0a020"></div>

<div id="dlg" class="abs"></div>
<div id="dlgin" class="abs"></div>
<div id="dmenu" class="abs"></div>
<div class="abs" style="left:720px;top:267px;width:572px;height:21px;background-image:radial-gradient(circle,#d9e4f2 .6px,rgba(255,255,255,0) .8px);background-size:2px 2px;-webkit-mask-image:linear-gradient(90deg,#000 75%,transparent);mask-image:linear-gradient(90deg,#000 75%,transparent)"></div>
<div id="dfile" class="abs"></div>
<div class="t" style="left:669px;top:271px;color:#fff;letter-spacing:-.3px">File</div>
<svg class="abs" style="left:700px;top:277px" width="8" height="4"><path d="M0 0h7.400L3.700 3.800z" fill="#fff"/></svg>
<!-- title -->
<svg class="abs" style="left:656px;top:241px" width="16" height="16" viewBox="0 0 16 16"><rect width="16" height="16" fill="#03104a"/><path d="M5.200 10.400H2.600V2.700H13.500V6.800" fill="none" stroke="#fff" stroke-width="1.400"/><rect x="4.100" y="5.200" width="3" height="3.600" fill="#fff"/><path d="M2.800 14.500C7 13.400 9 9 9.800 4.400C10.400 9 10.600 12 11.100 14.200C8 12.700 5 13.700 2.800 14.500Z" fill="#fff"/><circle cx="11.600" cy="5.600" r=".650" fill="#fff"/><rect x="11.300" y="8.400" width=".900" height="5.400" fill="#fff"/><rect x="13" y="9.800" width="1" height="4.400" fill="#fff"/></svg>
<div class="t" style="left:710px;top:240px;font-size:14.700px;line-height:20px;height:20px;color:#111;letter-spacing:-.005px">(1 - dat) - User ID: DooapInt, DooapIntSvcUser, networkAlias: DooapIntSvcUser</div>
<div class="wb" style="left:1258px;width:29px"></div>
<div class="wb" style="left:1286px;width:27px"></div>
<div class="wb" style="left:1312px;width:47px;background:#c75a4f;border-left-color:#6a3a36;border-right:none"></div>
<svg class="abs" style="left:1258px;top:235px" width="101" height="21" viewBox="1258 235 101 21"><rect x="1267" y="245.600" width="10.200" height="3.200" fill="#000"/><rect x="1296.100" y="242.400" width="7.800" height="5.600" fill="none" stroke="#000" stroke-width="2"/><path d="M1331.400 241.500L1339.600 248.900M1339.600 241.500L1331.400 248.900" stroke="#000" stroke-width="2.500"/></svg>
<!-- menu right icons -->
<svg class="abs" style="left:1303px;top:270px" width="16" height="14" viewBox="0 0 16 14"><defs><linearGradient id="ly" x1="0" y1="0" x2="0" y2="1"><stop offset="0" stop-color="#fdfdfd"/><stop offset="1" stop-color="#9aa0a8"/></linearGradient></defs><rect x=".5" y=".5" width="15" height="13" fill="#f3f3f3" stroke="#6c7078"/><rect x="1" y="1" width="3.600" height="10" fill="url(#ly)"/><path d="M4.600 1v10" stroke="#6c7078" stroke-width=".8"/><rect x="1" y="10.600" width="14" height="2.400" fill="#b5bac2"/><path d="M1 10.600h14" stroke="#6c7078" stroke-width=".8"/></svg>
<svg class="abs" style="left:1330px;top:268px" width="18" height="18" viewBox="0 0 18 18"><defs><radialGradient id="hp" cx="40%" cy="30%" r="75%"><stop offset="0" stop-color="#6f9cf0"/><stop offset=".55" stop-color="#1c49b8"/><stop offset="1" stop-color="#0d2f8a"/></radialGradient></defs><circle cx="9" cy="8.800" r="7.900" fill="#e6e8ec" stroke="#8a8f98" stroke-width=".9"/><circle cx="9" cy="8.800" r="6.500" fill="url(#hp)"/><text x="9" y="13" text-anchor="middle" font-family="Liberation Sans,Arial,sans-serif" font-weight="bold" font-size="11.500" fill="#fff">?</text></svg>
<!-- tab -->
<div id="dpage" class="abs"></div>
<div id="dtab" class="abs"></div>
<div class="t" style="left:672px;top:306px;letter-spacing:-.2px">Overview</div>
<div id="dgrid" class="abs"></div>
<!-- grid header -->
<div class="abs" style="left:693px;top:335px;width:79px;height:19px;background:linear-gradient(#fff,#f4f4f4);border:1px solid #e0e0e0"></div>
<div class="abs" style="left:772px;top:335px;width:60px;height:19px;background:linear-gradient(#fff,#f4f4f4);border:1px solid #e0e0e0;border-left:none"></div>
<div class="abs" style="left:832px;top:335px;width:368px;height:19px;background:linear-gradient(#fff,#f4f4f4);border:1px solid #e0e0e0;border-left:none"></div>
<div class="abs" style="left:1200px;top:353px;width:136px;height:1px;background:#e2e2e2"></div>
<div class="cb" style="left:677px;top:338px;width:13px;height:13px"></div>
<div class="t" style="left:699px;top:338px;letter-spacing:-.2px">User ID</div>
<svg class="abs" style="left:752px;top:341px" width="8" height="4"><path d="M0 3.800h7.200L3.600 0z" fill="#3c3c3c"/></svg>
<div class="t" style="left:778px;top:338px;letter-spacing:-.1px">Name</div>
<div class="t" style="left:838px;top:338px;letter-spacing:-.2px">Dooap user account</div>
<!-- data row -->
<div class="abs" style="left:693px;top:354px;width:507px;height:21px;background:linear-gradient(#d4ecfc,#b9e0f8);border-top:1px solid #c6e4f8;border-bottom:1px solid #a9d4f0"></div>
<div class="vline" style="left:692px;top:354px;height:228px;background:#d9e4f3"></div>
<div class="vline" style="left:771px;top:354px;height:228px;background:#d9e4f3"></div>
<div class="vline" style="left:831px;top:354px;height:228px;background:#d9e4f3"></div>
<div class="vline" style="left:1199px;top:354px;height:228px;background:#d9e4f3"></div>
<div class="abs" style="left:693px;top:354px;width:78px;height:21px;background:#fff;border:1px dotted #222"></div>
<div class="abs" style="left:698px;top:356px;width:51px;height:15px;background:#3a8ee8"></div>
<div class="t" style="left:699px;top:357px;color:#fff;letter-spacing:-.2px">DooapInt</div>
<div class="abs" style="left:749px;top:356px;width:1px;height:15px;background:#e8902a"></div>
<div class="abs" style="left:753px;top:356px;width:1px;height:17px;background:#6a6a6a"></div>
<svg class="abs" style="left:757px;top:362px" width="10" height="7"><path d="M1.200 1.200l3.300 3.500 3.300-3.500" fill="none" stroke="#333" stroke-width="1.600"/></svg>
<div class="t" style="left:778px;top:357px;letter-spacing:-.2px">DooapI...</div>
<div class="t" style="left:838px;top:357px;letter-spacing:.02px">doaeuwtst01webaatst01@dooapoy.onmicrosoft.com</div>
<div class="abs" style="left:1200px;top:374px;width:136px;height:1px;background:#dfe9f5"></div>
<!-- status bar -->
<div id="dstatus" class="abs"></div>
<svg class="abs" style="left:660px;top:604px" width="210" height="30" viewBox="660 604 210 30">
<g fill="#1a80f8"><rect x="670" y="612.600" width="2" height="12.600"/><path d="M682.300 612.600v12.600l-9.800-6.300z"/><path d="M708.500 612.600v12.600l-11.800-6.300z"/><path d="M747.800 612.600v12.600l11.800-6.300z"/><path d="M772 612.600v12.600l9.800-6.300z"/><rect x="782.300" y="612.600" width="2" height="12.600"/></g>
<g fill="#9cc4f2"><rect x="722" y="613" width="3" height="1.600"/><rect x="726" y="613" width="3.600" height="1.600"/><rect x="730.600" y="613" width="3.600" height="1.600"/><rect x="722" y="616" width="3" height="1.600"/><rect x="726" y="616" width="3.600" height="1.600"/><rect x="730.600" y="616" width="3.600" height="1.600"/><rect x="722" y="619" width="3" height="1.600"/><rect x="726" y="619" width="3.600" height="1.600"/><rect x="730.600" y="619" width="3.600" height="1.600"/><rect x="722" y="622" width="3" height="1.600"/><rect x="726" y="622" width="3.600" height="1.600"/><rect x="730.600" y="622" width="3.600" height="1.600"/></g>
<rect x="802.500" y="607.500" width="23" height="23" rx="2" fill="#fbd468" stroke="#e8a32a"/>
<path d="M806.600 626.600l1-3.200 10.600-10.200 2.200 2.200-10.600 10.200z" fill="#f3c94a" stroke="#7a5a1a" stroke-width=".6" stroke-linejoin="round"/>
<path d="M806.600 626.600l.5-1.500 1 1z" fill="#333"/>
<path d="M818.200 613.200l1-1c.8-.6 2.800 1.400 2.200 2.200l-1 1z" fill="#d9534a" stroke="#7a2a24" stroke-width=".4"/>
<path d="M843.500 614.500h9l3.500 3v9h-12.500z" fill="#fdfdfd" stroke="#9a9a9a" stroke-width=".9"/>
<path d="M852.500 614.500v3h3.500" fill="none" stroke="#9a9a9a" stroke-width=".8"/>
<path d="M848.800 612.600v5.400c0 1.400-2.200 1.400-2.200 0v-5.600c0-2.200 3.600-2.200 3.600 0v6.600c0 2.800-5 2.800-5 0v-5" fill="none" stroke="#555" stroke-width=".9"/>
</svg>
<div class="ssep" style="left:795px"></div><div class="ssep" style="left:831px"></div><div class="ssep" style="left:867px"></div><div class="ssep" style="left:960px"></div><div class="ssep" style="left:972px"></div><div class="ssep" style="left:1019px"></div><div class="ssep" style="left:1047px"></div><div class="ssep" style="left:1077px"></div>
<div class="t" style="left:874px;top:613px;color:#222;letter-spacing:-.05px">ID for the user</div>
<div class="t" style="left:979px;top:613px;color:#222;letter-spacing:-.1px">Dooap</div>
<div class="t" style="left:1026px;top:613px;color:#222">var</div>
<div class="t" style="left:1054px;top:613px;color:#222">dat</div>
<div class="t" style="left:1084px;top:613px;color:#222;letter-spacing:-.8px">DAX2012R3CU12_DOOAP_TEST</div>
<div class="abs" style="left:1266px;top:607px;width:74px;height:24px;background:#e1e1e1;border:1px solid #707070"></div>
<div class="t c" style="left:1266px;top:613px;width:74px;color:#000">Close</div>
<svg class="abs" style="left:1344px;top:620px" width="12" height="12"><g fill="#b5bcc8"><rect x="9" y="0" width="2" height="2"/><rect x="6" y="3" width="2" height="2"/><rect x="9" y="3" width="2" height="2"/><rect x="3" y="6" width="2" height="2"/><rect x="6" y="6" width="2" height="2"/><rect x="9" y="6" width="2" height="2"/><rect x="0" y="9" width="2" height="2"/><rect x="3" y="9" width="2" height="2"/><rect x="6" y="9" width="2" height="2"/><rect x="9" y="9" width="2" height="2"/></g></svg>

</body>
</html>
